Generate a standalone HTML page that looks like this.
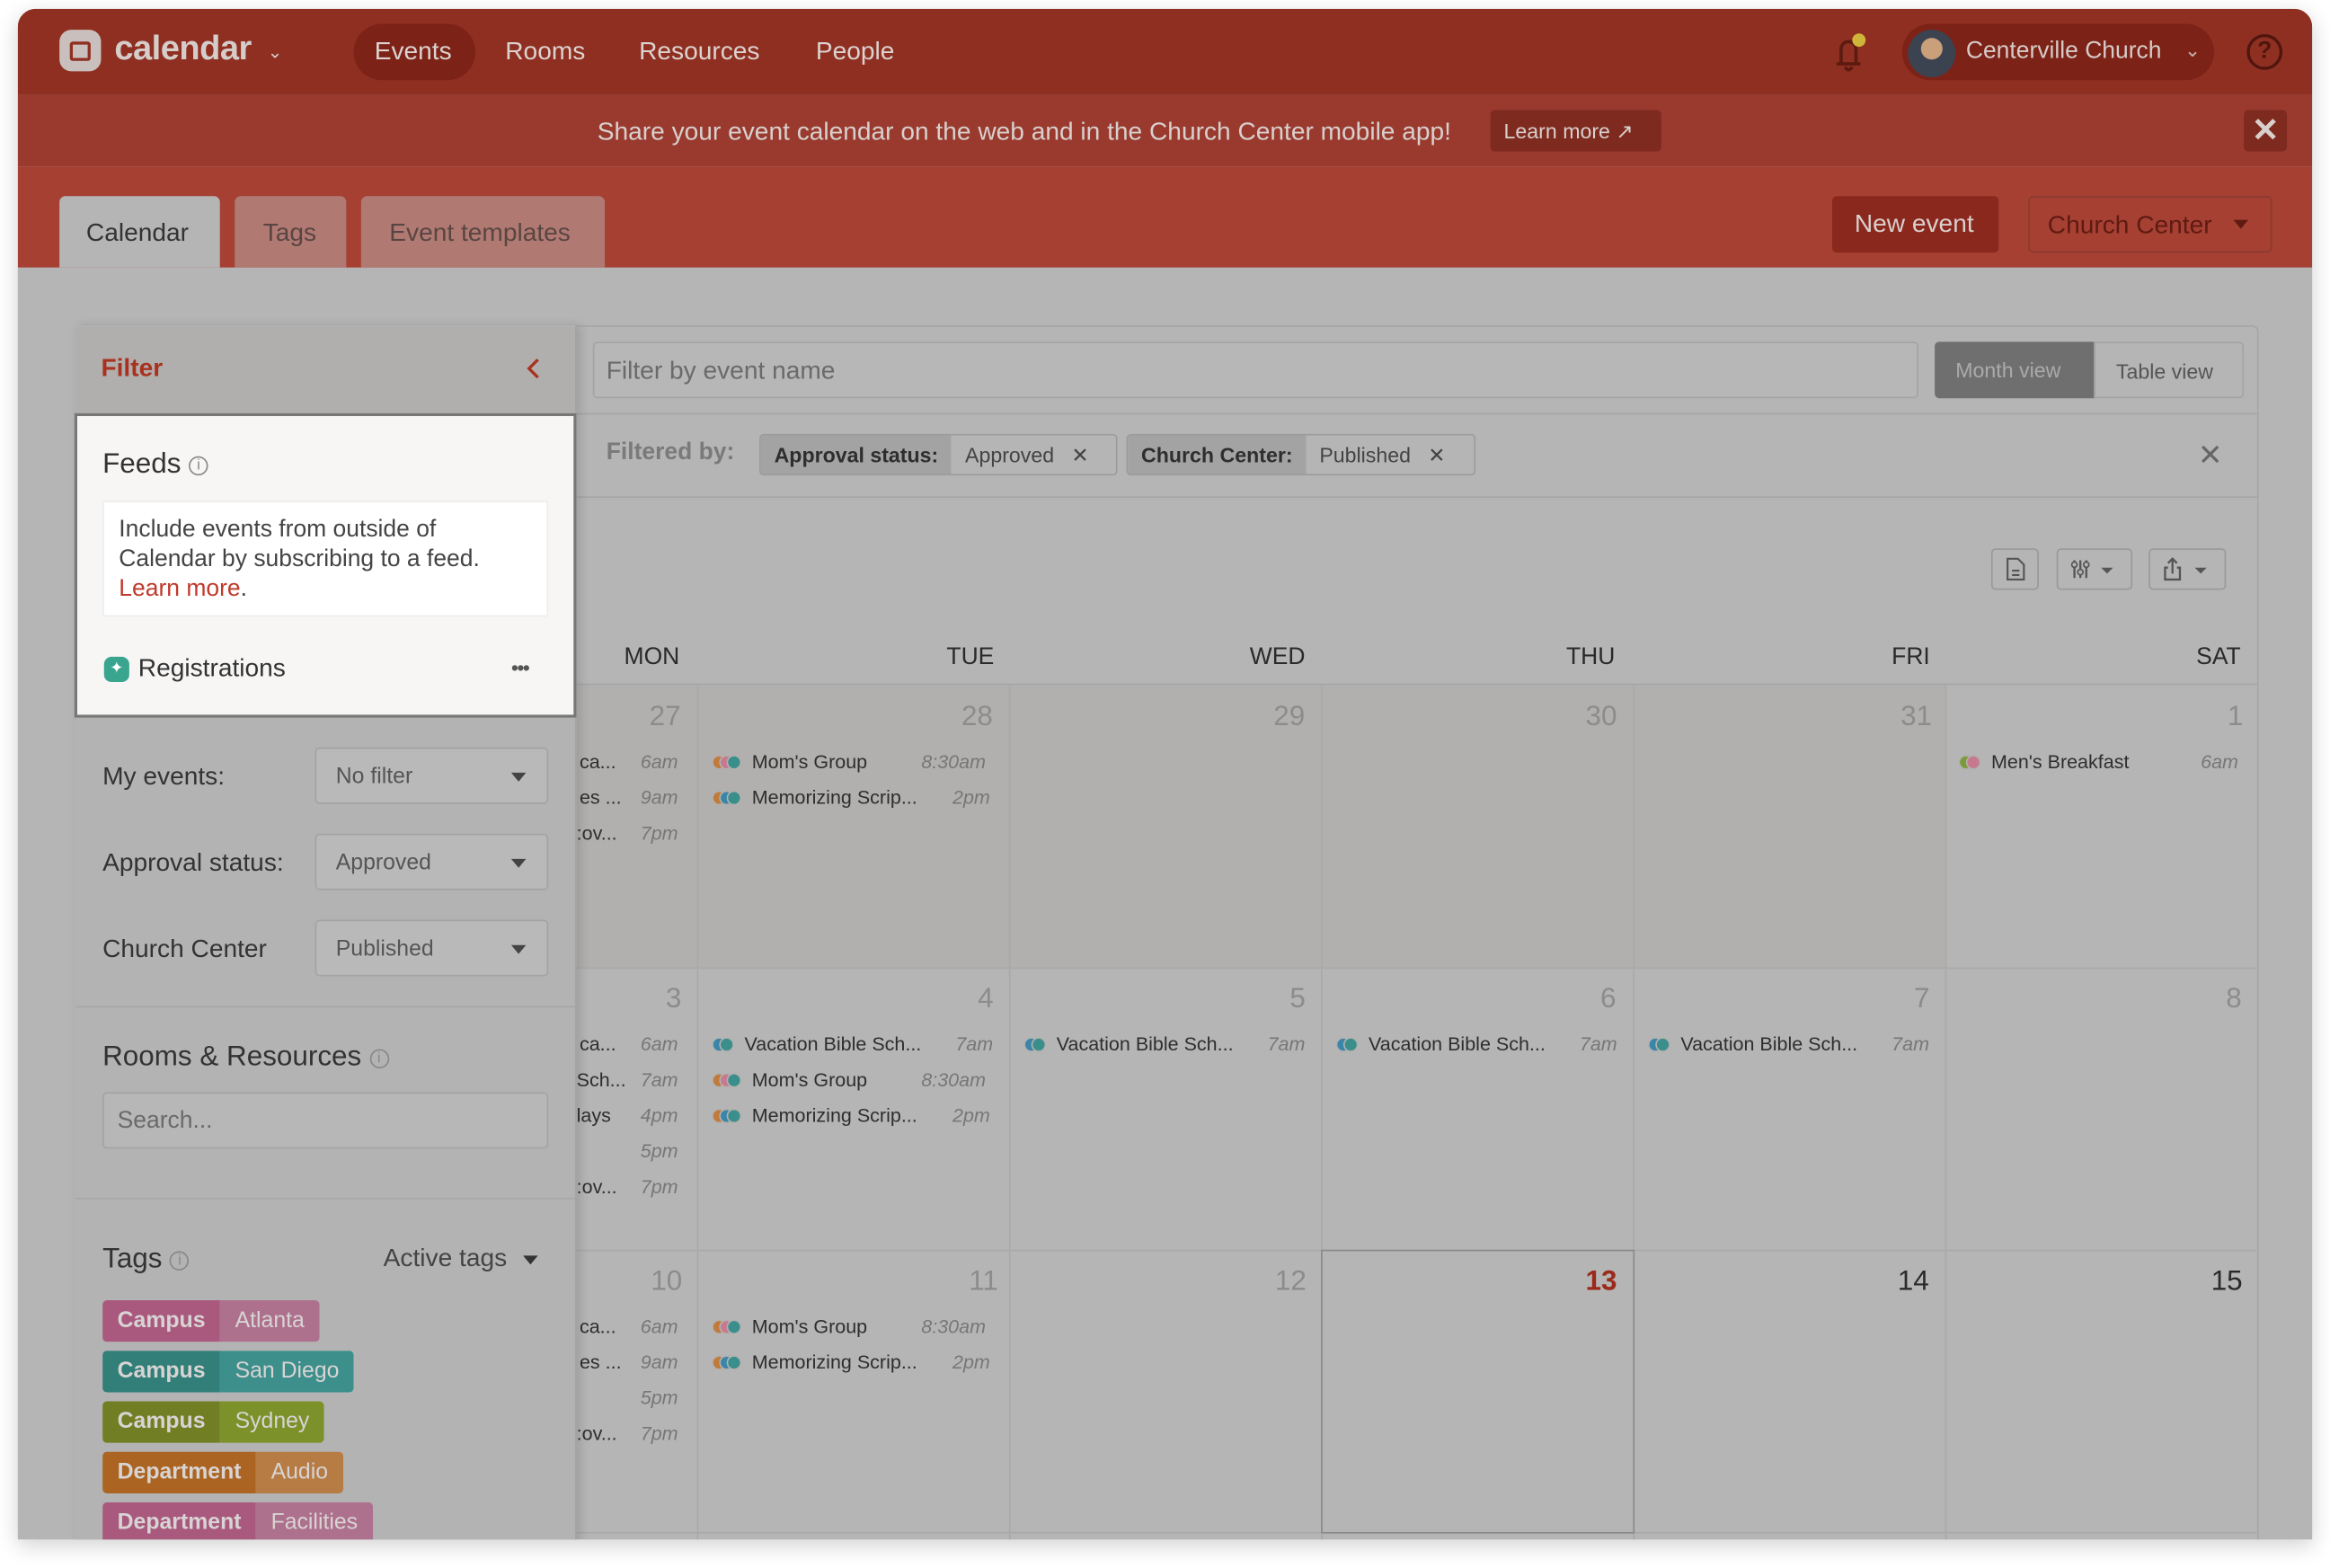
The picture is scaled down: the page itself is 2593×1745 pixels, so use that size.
<!DOCTYPE html>
<html><head><meta charset="utf-8"><style>
*{box-sizing:border-box;margin:0;padding:0}
html,body{width:2593px;height:1745px;overflow:hidden;background:#fff;font-family:"Liberation Sans",sans-serif}
#s{position:absolute;left:0;top:0;width:1568px;height:1055px;transform:scale(1.65370);transform-origin:0 0}
.a{position:absolute}
.win{left:12px;top:6px;width:1544px;height:1030px;border-radius:12px 12px 0 0;overflow:hidden;background:#b5b5b5;box-shadow:0 4px 14px rgba(0,0,0,.18)}
.nav{color:#dcd2cf;font-size:17px;top:24px}
.t{white-space:nowrap}
.sel{border:1px solid #a3a3a3;border-radius:3px;background:#b9b9b9;color:#555;font-size:15px;padding:10px 13px;width:157px;height:38px}
.sel:after{content:"";position:absolute;right:14px;top:16px;border:5px solid transparent;border-top:6px solid #444}
.lbl{font-size:17px;color:#333}
.tag{height:28px;border-radius:3px;overflow:hidden;display:flex;font-size:15px;color:#d8d4d4}
.tag b{padding:5px 10px;font-weight:bold}
.tag span{padding:5px 10px}
.dh{font-size:16px;color:#2a2a2a;top:428px}
.num{font-size:19px;color:#8c8c8c}
.ev{font-size:13px;color:#2e2e2e;white-space:nowrap}
.tm{font-size:13px;color:#777;font-style:italic}
.dots{display:inline-block;position:relative;width:22px;height:10px;vertical-align:-1px;margin-right:5px}
.dots i{position:absolute;top:0;width:10px;height:10px;border-radius:50%;border:1px solid #b2b1af}
.ibtn{border:1px solid #999;border-radius:3px;height:28px;top:363px}
</style></head><body><div id="s">
<div class="a win">
 <div class="a" style="left:0;top:0;width:1544px;height:58px;background:#8f2f21"></div>
 <div class="a" style="left:28px;top:14px;width:28px;height:28px;border-radius:8px;background:#c9c0bd"></div>
 <div class="a" style="left:35px;top:22px;width:14px;height:13px;border:2.5px solid #8f2f21;border-radius:2px"></div>
 <div class="a t" style="left:65px;top:13px;font-size:23px;color:#d5cdca;font-weight:bold;letter-spacing:-.3px">calendar</div>
 <div class="a" style="left:168px;top:22px;font-size:12px;color:#d5cdca">&#8964;</div>
 <div class="a" style="left:226px;top:10px;width:82px;height:38px;border-radius:19px;background:#7d2217"></div>
 <div class="a nav t" style="left:240px;top:19px">Events</div>
 <div class="a nav t" style="left:328px;top:19px">Rooms</div>
 <div class="a nav t" style="left:418px;top:19px">Resources</div>
 <div class="a nav t" style="left:537px;top:19px">People</div>
 <svg class="a" style="left:1218px;top:14px" width="30" height="30" viewBox="0 0 30 30"><path d="M6 23h16M9 22V13a5 5 0 0 1 10 0v9M12 25a2 2 0 0 0 4 0" fill="none" stroke="#5c1a10" stroke-width="2.2"/><circle cx="21" cy="7" r="4.5" fill="#cfb63a"/></svg>
 <div class="a" style="left:1268px;top:10px;width:210px;height:38px;border-radius:19px;background:#7d2217"></div>
 <div class="a" style="left:1272px;top:14px;width:32px;height:32px;border-radius:50%;background:radial-gradient(circle at 50% 40%,#c9a07a 0 28%,#3b4250 30%)"></div>
 <div class="a t" style="left:1311px;top:20px;font-size:16px;color:#d5cbc8">Centerville Church</div>
 <div class="a" style="left:1458px;top:20px;font-size:13px;color:#c4b4b0">&#8964;</div>
 <div class="a" style="left:1500px;top:17px;width:24px;height:24px;border-radius:50%;border:2px solid #4f160d;color:#4f160d;font-size:16px;font-weight:bold;text-align:center;line-height:20px">?</div>
 <div class="a" style="left:0;top:58px;width:1544px;height:48px;background:#9a3a2f"></div>
 <div class="a t" style="left:390px;top:73px;font-size:17px;color:#d8d0cd">Share your event calendar on the web and in the Church Center mobile app!</div>
 <div class="a t" style="left:991px;top:68px;width:115px;height:28px;background:#7f2a1f;border-radius:3px;color:#d8d0cd;font-size:14px;padding:6px 9px">Learn more &#x2197;&#xFE0E;</div>
 <div class="a" style="left:1498px;top:68px;width:29px;height:28px;background:#7f2a1f;border-radius:3px;color:#d8d0cd;font-size:22px;text-align:center;line-height:27px;font-weight:bold">&#x2715;</div>
 <div class="a" style="left:0;top:106px;width:1544px;height:68px;background:#a54033"></div>
 <div class="a" style="left:28px;top:126px;width:108px;height:48px;background:#b5b5b5;border-radius:4px 4px 0 0"></div>
 <div class="a t" style="left:46px;top:141px;font-size:17px;color:#333">Calendar</div>
 <div class="a" style="left:146px;top:126px;width:75px;height:48px;background:#b07a73;border-radius:4px 4px 0 0"></div>
 <div class="a t" style="left:165px;top:141px;font-size:17px;color:#5a4542">Tags</div>
 <div class="a" style="left:231px;top:126px;width:164px;height:48px;background:#b07a73;border-radius:4px 4px 0 0"></div>
 <div class="a t" style="left:250px;top:141px;font-size:17px;color:#5a4542">Event templates</div>
 <div class="a t" style="left:1221px;top:126px;width:112px;height:38px;background:#8a281d;border-radius:3px;color:#d9cfcc;font-size:17px;padding:9px 15px">New event</div>
 <div class="a t" style="left:1353px;top:126px;width:164px;height:38px;border:1px solid #8a3a30;border-radius:3px;color:#5f1a12;font-size:17px;padding:9px 12px">Church Center</div>
 <div class="a" style="left:1491px;top:142px;border:5px solid transparent;border-top:6px solid #5f1a12"></div>
 <div class="a" style="left:38px;top:213px;width:1470px;height:830px;border:1px solid #a6a6a6;border-radius:4px"></div>
 <div class="a" style="left:387px;top:224px;width:892px;height:38px;border:1px solid #a4a4a4;border-radius:3px;background:#b7b7b7"></div>
 <div class="a t" style="left:396px;top:234px;font-size:17px;color:#6a6a6a">Filter by event name</div>
 <div class="a t" style="left:1290px;top:224px;width:108px;height:38px;background:#6f6f6f;border-radius:3px 0 0 3px;color:#aaa;font-size:14px;padding:11px 14px">Month view</div>
 <div class="a t" style="left:1397px;top:224px;width:101px;height:38px;border:1px solid #a4a4a4;border-radius:0 3px 3px 0;color:#555;font-size:14px;padding:11px 14px">Table view</div>
 <div class="a" style="left:376px;top:272px;width:1132px;height:1px;background:#a6a6a6"></div>
 <div class="a t" style="left:396px;top:290px;font-size:16px;color:#7a7a7a;font-weight:bold">Filtered by:</div>
 <div class="a" style="left:499px;top:286px;width:241px;height:28px;border:1px solid #9b9b9b;border-radius:3px;overflow:hidden;display:flex;font-size:14px">
  <div style="background:#a3a3a3;padding:5px 9px;font-weight:bold;color:#2e2e2e">Approval status:</div><div style="padding:5px 9px;color:#444">Approved &nbsp;&nbsp;&#x2715;</div></div>
 <div class="a" style="left:746px;top:286px;width:235px;height:28px;border:1px solid #9b9b9b;border-radius:3px;overflow:hidden;display:flex;font-size:14px">
  <div style="background:#a3a3a3;padding:5px 9px;font-weight:bold;color:#2e2e2e">Church Center:</div><div style="padding:5px 9px;color:#444">Published &nbsp;&nbsp;&#x2715;</div></div>
 <div class="a" style="left:1467px;top:288px;font-size:20px;color:#666">&#x2715;</div>
 <div class="a" style="left:376px;top:328px;width:1132px;height:1px;background:#a6a6a6"></div>
 <div class="a ibtn" style="left:1328px;width:32px"><svg width="30" height="26" viewBox="0 0 30 26"><path d="M10 6h7l4 4v10H10z M13 14h5M13 17h5" fill="none" stroke="#555" stroke-width="1.3"/></svg></div>
 <div class="a ibtn" style="left:1372px;width:51px"><svg width="50" height="26" viewBox="0 0 50 26"><path d="M11 7v12M15 7v12M19 7v12" stroke="#555" stroke-width="1.4"/><circle cx="11" cy="10" r="1.8" fill="#b5b5b5" stroke="#555"/><circle cx="15" cy="15" r="1.8" fill="#b5b5b5" stroke="#555"/><circle cx="19" cy="10" r="1.8" fill="#b5b5b5" stroke="#555"/><path d="M29 12h8l-4 4z" fill="#555"/></svg></div>
 <div class="a ibtn" style="left:1434px;width:52px"><svg width="50" height="26" viewBox="0 0 50 26"><path d="M12 12h-2v8h10v-8h-2M15 16V6M12 9l3-3 3 3" fill="none" stroke="#555" stroke-width="1.4"/><path d="M30 12h8l-4 4z" fill="#555"/></svg></div>
 <div class="a dh" style="left:408px">MON</div>
 <div class="a dh" style="left:625px">TUE</div>
 <div class="a dh" style="left:829px">WED</div>
 <div class="a dh" style="left:1042px">THU</div>
 <div class="a dh" style="left:1261px">FRI</div>
 <div class="a dh" style="left:1466px">SAT</div>
 <div class="a" style="left:376px;top:454px;width:1132px;height:1px;background:#a6a6a6"></div>
 <div class="a" style="left:376px;top:455px;width:921px;height:190px;background:#b1b0ae"></div>
 <div class="a" style="left:457px;top:455px;width:1px;height:576px;background:#a9a9a9"></div>
 <div class="a" style="left:667px;top:455px;width:1px;height:576px;background:#a9a9a9"></div>
 <div class="a" style="left:877px;top:455px;width:1px;height:576px;background:#a9a9a9"></div>
 <div class="a" style="left:1087px;top:455px;width:1px;height:576px;background:#a9a9a9"></div>
 <div class="a" style="left:1297px;top:455px;width:1px;height:576px;background:#a9a9a9"></div>
 <div class="a" style="left:376px;top:645px;width:1132px;height:1px;background:#a9a9a9"></div>
 <div class="a" style="left:376px;top:835px;width:1132px;height:1px;background:#a9a9a9"></div>
 <div class="a" style="left:376px;top:1025px;width:1132px;height:1px;background:#a9a9a9"></div>
 <div class="a" style="left:877px;top:835px;width:211px;height:191px;border:1px solid #8a8a8a"></div>
 <div class="a num" style="left:425px;top:466px">27</div><div class="a num" style="left:635px;top:466px">28</div><div class="a num" style="left:845px;top:466px">29</div><div class="a num" style="left:1055px;top:466px">30</div><div class="a num" style="left:1267px;top:466px">31</div><div class="a num" style="left:1487px;top:466px">1</div>
 <div class="a num" style="left:436px;top:656px">3</div><div class="a num" style="left:646px;top:656px">4</div><div class="a num" style="left:856px;top:656px">5</div><div class="a num" style="left:1065px;top:656px">6</div><div class="a num" style="left:1276px;top:656px">7</div><div class="a num" style="left:1486px;top:656px">8</div>
 <div class="a num" style="left:426px;top:846px">10</div><div class="a num" style="left:640px;top:846px">11</div><div class="a num" style="left:846px;top:846px">12</div>
 <div class="a num" style="left:1055px;top:846px;color:#9b2a1a;font-weight:bold">13</div>
 <div class="a num" style="left:1265px;top:846px;color:#2a2a2a">14</div><div class="a num" style="left:1476px;top:846px;color:#2a2a2a">15</div>
 <div class="a ev" style="left:378px;top:499px">ca...</div><div class="a tm" style="left:419px;top:499px">6am</div>
 <div class="a ev" style="left:378px;top:523px">es ...</div><div class="a tm" style="left:419px;top:523px">9am</div>
 <div class="a ev" style="left:376px;top:547px">:ov...</div><div class="a tm" style="left:419px;top:547px">7pm</div>
 <div class="a ev" style="left:378px;top:689px">ca...</div><div class="a tm" style="left:419px;top:689px">6am</div>
 <div class="a ev" style="left:376px;top:713px">Sch...</div><div class="a tm" style="left:419px;top:713px">7am</div>
 <div class="a ev" style="left:376px;top:737px">lays</div><div class="a tm" style="left:419px;top:737px">4pm</div>
 <div class="a tm" style="left:419px;top:761px">5pm</div>
 <div class="a ev" style="left:376px;top:785px">:ov...</div><div class="a tm" style="left:419px;top:785px">7pm</div>
 <div class="a ev" style="left:378px;top:879px">ca...</div><div class="a tm" style="left:419px;top:879px">6am</div>
 <div class="a ev" style="left:378px;top:903px">es ...</div><div class="a tm" style="left:419px;top:903px">9am</div>
 <div class="a tm" style="left:419px;top:927px">5pm</div>
 <div class="a ev" style="left:376px;top:951px">:ov...</div><div class="a tm" style="left:419px;top:951px">7pm</div>
 <div class="a ev" style="left:467px;top:499px"><span class="dots"><i style="left:0;background:#c07a3c"></i><i style="left:5px;background:#c77a8f"></i><i style="left:10px;background:#3a8e8b"></i></span>Mom's Group</div><div class="a tm" style="left:608px;top:499px">8:30am</div>
 <div class="a ev" style="left:467px;top:523px"><span class="dots"><i style="left:0;background:#c07a3c"></i><i style="left:5px;background:#3a85a8"></i><i style="left:10px;background:#3a8e8b"></i></span>Memorizing Scrip...</div><div class="a tm" style="left:629px;top:523px">2pm</div>
 <div class="a ev" style="left:1306px;top:499px"><span class="dots" style="width:17px"><i style="left:0;background:#7d9a38"></i><i style="left:5px;background:#c77a8f"></i></span>Men's Breakfast</div><div class="a tm" style="left:1469px;top:499px">6am</div>
 <div class="a ev" style="left:467px;top:689px"><span class="dots" style="width:17px"><i style="left:0;background:#3a85a8"></i><i style="left:5px;background:#3a8e8b"></i></span>Vacation Bible Sch...</div><div class="a tm" style="left:631px;top:689px">7am</div>
 <div class="a ev" style="left:467px;top:713px"><span class="dots"><i style="left:0;background:#c07a3c"></i><i style="left:5px;background:#c77a8f"></i><i style="left:10px;background:#3a8e8b"></i></span>Mom's Group</div><div class="a tm" style="left:608px;top:713px">8:30am</div>
 <div class="a ev" style="left:467px;top:737px"><span class="dots"><i style="left:0;background:#c07a3c"></i><i style="left:5px;background:#3a85a8"></i><i style="left:10px;background:#3a8e8b"></i></span>Memorizing Scrip...</div><div class="a tm" style="left:629px;top:737px">2pm</div>
 <div class="a ev" style="left:677px;top:689px"><span class="dots" style="width:17px"><i style="left:0;background:#3a85a8"></i><i style="left:5px;background:#3a8e8b"></i></span>Vacation Bible Sch...</div><div class="a tm" style="left:841px;top:689px">7am</div>
 <div class="a ev" style="left:887px;top:689px"><span class="dots" style="width:17px"><i style="left:0;background:#3a85a8"></i><i style="left:5px;background:#3a8e8b"></i></span>Vacation Bible Sch...</div><div class="a tm" style="left:1051px;top:689px">7am</div>
 <div class="a ev" style="left:1097px;top:689px"><span class="dots" style="width:17px"><i style="left:0;background:#3a85a8"></i><i style="left:5px;background:#3a8e8b"></i></span>Vacation Bible Sch...</div><div class="a tm" style="left:1261px;top:689px">7am</div>
 <div class="a ev" style="left:467px;top:879px"><span class="dots"><i style="left:0;background:#c07a3c"></i><i style="left:5px;background:#c77a8f"></i><i style="left:10px;background:#3a8e8b"></i></span>Mom's Group</div><div class="a tm" style="left:608px;top:879px">8:30am</div>
 <div class="a ev" style="left:467px;top:903px"><span class="dots"><i style="left:0;background:#c07a3c"></i><i style="left:5px;background:#3a85a8"></i><i style="left:10px;background:#3a8e8b"></i></span>Memorizing Scrip...</div><div class="a tm" style="left:629px;top:903px">2pm</div>
 <div class="a" style="left:38px;top:213px;width:338px;height:830px;background:#b3b3b3;border-right:1px solid #a4a4a4;box-shadow:3px 0 6px rgba(0,0,0,.12)"></div>
 <div class="a" style="left:39px;top:214px;width:336px;height:58px;background:#b0afae"></div>
 <div class="a t" style="left:56px;top:232px;font-size:17px;font-weight:bold;color:#a8321f">Filter</div>
 <svg class="a" style="left:340px;top:234px" width="14" height="16" viewBox="0 0 14 16"><path d="M10 2L4 8l6 6" fill="none" stroke="#a8321f" stroke-width="2"/></svg>
 <div class="a" style="left:38px;top:272px;width:338px;height:205px;background:#f7f6f5;border:2px solid #777"></div>
 <div class="a t" style="left:57px;top:296px;font-size:19px;color:#333">Feeds <span style="display:inline-block;width:13px;height:13px;border:1px solid #888;border-radius:50%;font-size:10px;color:#888;text-align:center;line-height:12px;vertical-align:2px">i</span></div>
 <div class="a" style="left:57px;top:331px;width:300px;height:78px;background:#fff;border:1px solid #ececec"></div>
 <div class="a" style="left:68px;top:341px;width:256px;font-size:16px;color:#444;line-height:20px">Include events from outside of Calendar by subscribing to a feed. <span style="color:#c0392b">Learn more</span>.</div>
 <div class="a" style="left:58px;top:436px;width:17px;height:17px;border-radius:5px;background:#3aa58f;color:#fff;font-size:11px;text-align:center;line-height:17px">&#x2726;</div>
 <div class="a t" style="left:81px;top:434px;font-size:17px;color:#333">Registrations</div>
 <div class="a" style="left:332px;top:435px;font-size:14px;color:#555;letter-spacing:-1px">&#8226;&#8226;&#8226;</div>
 <div class="a lbl t" style="left:57px;top:507px">My events:</div><div class="a sel t" style="left:200px;top:497px">No filter</div>
 <div class="a lbl t" style="left:57px;top:565px">Approval status:</div><div class="a sel t" style="left:200px;top:555px">Approved</div>
 <div class="a lbl t" style="left:57px;top:623px">Church Center</div><div class="a sel t" style="left:200px;top:613px">Published</div>
 <div class="a" style="left:39px;top:671px;width:336px;height:1px;background:#a6a6a6"></div>
 <div class="a t" style="left:57px;top:695px;font-size:19px;color:#333">Rooms &amp; Resources <span style="display:inline-block;width:13px;height:13px;border:1px solid #888;border-radius:50%;font-size:10px;color:#888;text-align:center;line-height:12px;vertical-align:2px">i</span></div>
 <div class="a t" style="left:57px;top:729px;width:300px;height:38px;border:1px solid #a3a3a3;border-radius:3px;background:#b7b7b7;font-size:16px;color:#6a6a6a;padding:10px 9px">Search...</div>
 <div class="a" style="left:39px;top:800px;width:336px;height:1px;background:#a6a6a6"></div>
 <div class="a t" style="left:57px;top:831px;font-size:19px;color:#333">Tags <span style="display:inline-block;width:13px;height:13px;border:1px solid #888;border-radius:50%;font-size:10px;color:#888;text-align:center;line-height:12px;vertical-align:2px">i</span></div>
 <div class="a t" style="left:246px;top:831px;font-size:17px;color:#444">Active tags</div>
 <div class="a" style="left:340px;top:839px;border:5px solid transparent;border-top:6px solid #333"></div>
 <div class="a tag" style="left:57px;top:869px"><b style="background:#a9597e">Campus</b><span style="background:#ae718d">Atlanta</span></div>
 <div class="a tag" style="left:57px;top:903px"><b style="background:#317f78">Campus</b><span style="background:#3d8f8b">San Diego</span></div>
 <div class="a tag" style="left:57px;top:937px"><b style="background:#717e23">Campus</b><span style="background:#7c912a">Sydney</span></div>
 <div class="a tag" style="left:57px;top:971px"><b style="background:#ab6422">Department</b><span style="background:#b77b44">Audio</span></div>
 <div class="a tag" style="left:57px;top:1005px"><b style="background:#a9597e">Department</b><span style="background:#ae718d">Facilities</span></div>
</div>
</div></body></html>
